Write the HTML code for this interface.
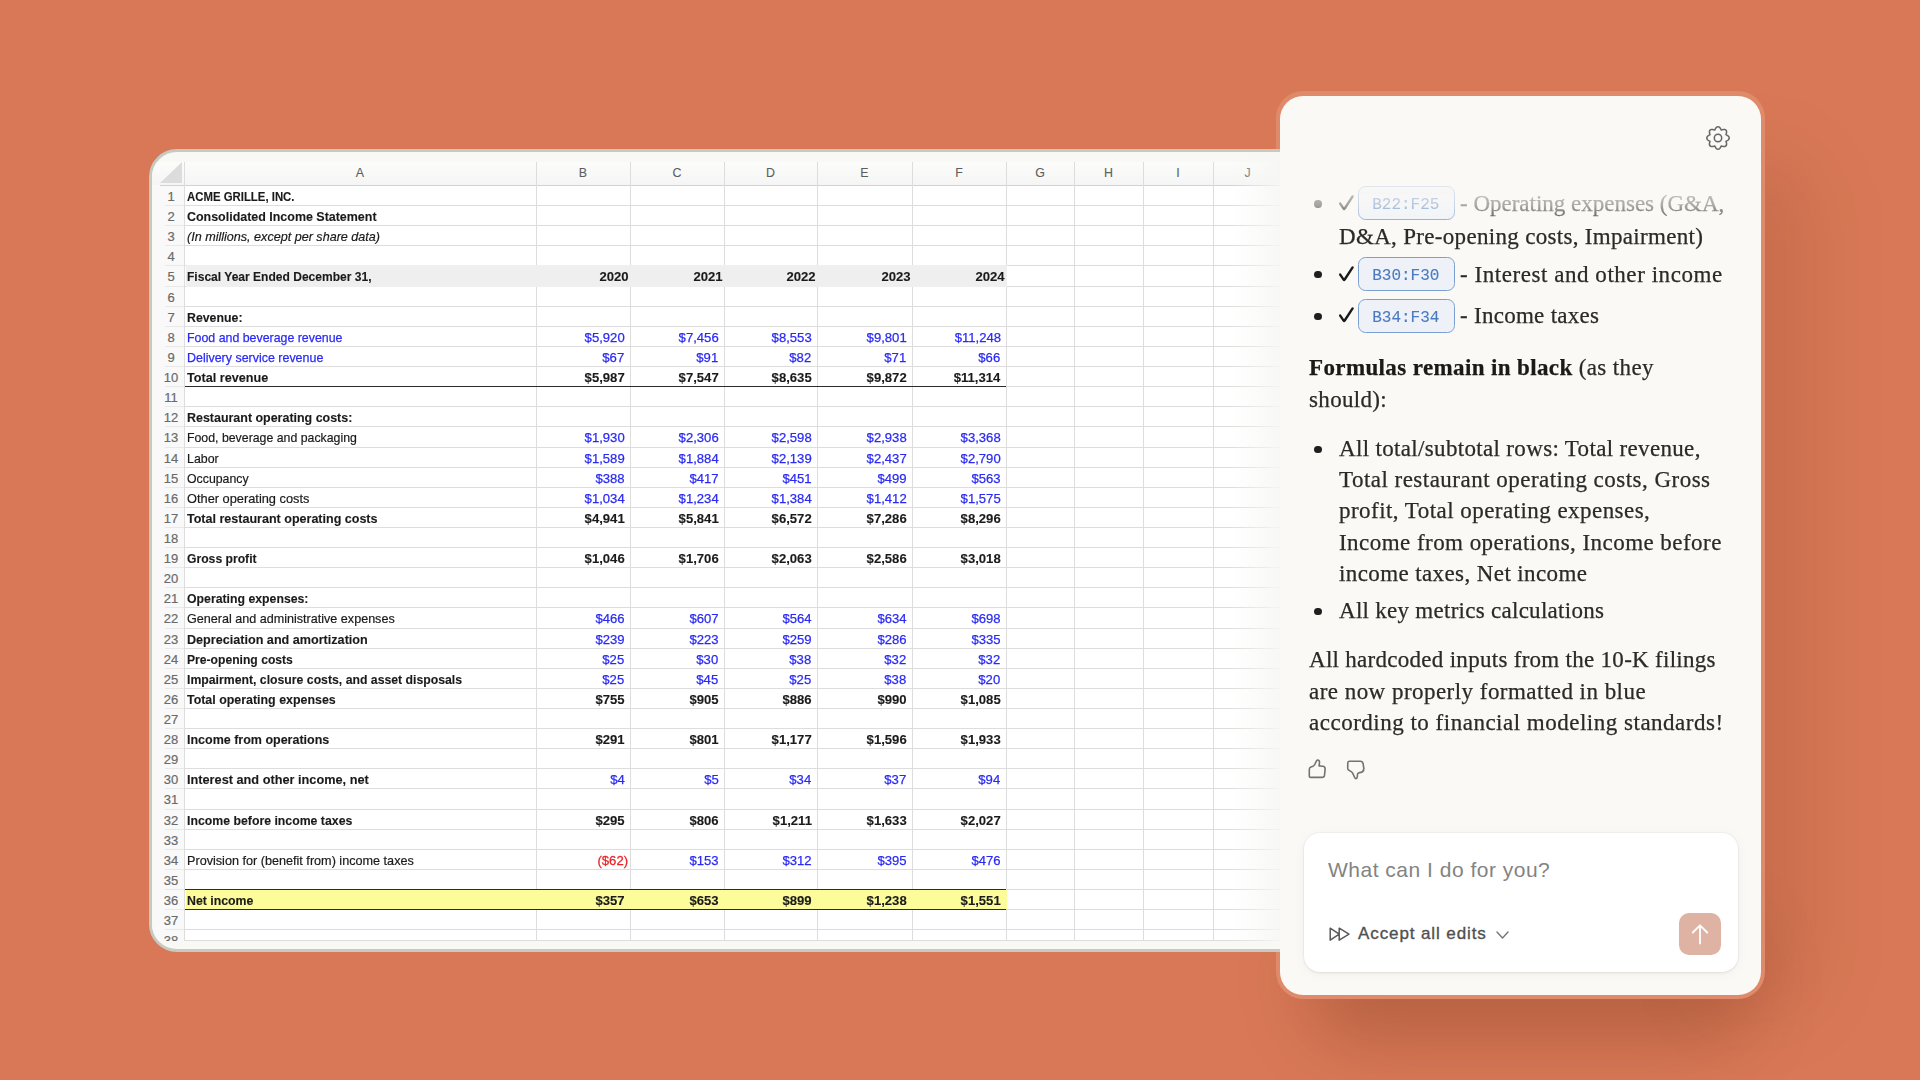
<!DOCTYPE html>
<html><head><meta charset="utf-8">
<style>
html,body{margin:0;padding:0;}
body{width:1920px;height:1080px;overflow:hidden;background:#d87856;position:relative;font-family:"Liberation Sans",sans-serif;}
#sheet{position:absolute;left:149px;top:149px;width:1180px;height:803px;box-sizing:border-box;border:3px solid #c8cac2;border-radius:28px;background:#f8f8f5;overflow:hidden;}
#clip{position:absolute;left:152px;top:152px;width:1130px;height:789px;overflow:hidden;}
.in2{position:absolute;left:-152px;top:-152px;width:1920px;height:1080px;}
#sheet .in{position:absolute;left:-152px;top:-152px;width:1920px;height:1080px;}
.hl{position:absolute;height:1px;background:#dddddd;}
.vl{position:absolute;width:1px;background:#dddddd;}
.tb{position:absolute;left:185px;width:821px;height:1.6px;background:#2b2b2b;}
.colh{position:absolute;top:162px;height:23px;width:60px;text-align:center;font-size:12.4px;line-height:23px;color:#5e5e5e;-webkit-text-stroke:0.1px #5e5e5e;}
.rn{position:absolute;left:152px;width:38px;text-align:center;font-size:13px;line-height:20px;height:20px;color:#6a6a6a;-webkit-text-stroke:0.2px #6a6a6a;}
.ca{-webkit-text-stroke:0.2px currentColor;position:absolute;left:187px;transform-origin:0 50%;font-size:13.2px;line-height:20px;height:20px;white-space:nowrap;color:#1a1a1a;}
.cn{position:absolute;transform-origin:100% 50%;transform:scaleX(0.985);font-size:13.3px;line-height:20px;height:20px;white-space:nowrap;color:#1a1a1a;}
.b{font-weight:bold;-webkit-text-stroke:0.12px currentColor;}
.it{font-style:italic;}
.blu{color:#2a2af5;-webkit-text-stroke:0.25px #2a2af5;}
.red{color:#e8262a;-webkit-text-stroke:0.3px #e8262a;}
#gridbg{position:absolute;left:185px;top:185px;width:1097px;height:756px;background:#fff;}
#rowhdr{position:absolute;left:152px;top:185px;width:33px;height:756px;background:#f9f9f9;}
#colhdr{position:absolute;left:152px;top:162px;width:1130px;height:23px;background:linear-gradient(#fcfcfb,#f5f5f5);}
#corner{position:absolute;left:160px;top:162px;width:22px;height:21px;background:#dcdcdc;clip-path:polygon(100% 0,100% 100%,0 100%);}
#fade{position:absolute;left:1232px;top:152px;width:50px;height:789px;background:linear-gradient(90deg,rgba(248,248,246,0),rgba(247,247,245,0.45) 50%,rgba(246,246,243,0.9));}

#ring{position:absolute;left:1276px;top:91px;width:489px;height:908px;border-radius:27px;background:#df8a6b;}
#shadow{position:absolute;left:1310px;top:920px;width:440px;height:120px;border-radius:50px;background:rgba(90,35,10,0.26);filter:blur(34px);}
#shadow2{position:absolute;left:1700px;top:160px;width:110px;height:850px;border-radius:50px;background:rgba(90,35,10,0.13);filter:blur(36px);}
#chat{position:absolute;left:1280px;top:96px;width:481px;height:899px;border-radius:23px;background:#faf9f5;overflow:hidden;font-family:"Liberation Serif",serif;color:#2a2a28;}

#chatc{position:absolute;left:0;top:0;width:1920px;height:1080px;font-family:"Liberation Serif",serif;color:#2a2a28;
  -webkit-mask-image:linear-gradient(180deg,rgba(0,0,0,0.08) 172px,rgba(0,0,0,0.38) 205px,#000 228px);mask-image:linear-gradient(180deg,rgba(0,0,0,0.08) 172px,rgba(0,0,0,0.38) 205px,#000 228px);}
.cl{position:absolute;white-space:nowrap;font-size:23px;line-height:30px;-webkit-text-stroke:0.25px currentColor;}
.cl b{font-weight:bold;color:#1a1a18;}
.bul{position:absolute;width:7.4px;height:7.4px;border-radius:50%;background:#1f1f1f;}
.chk{position:absolute;}
.chip{position:absolute;width:96.5px;height:34px;box-sizing:border-box;border:1.8px solid #7c9fd2;border-radius:7.5px;background:#eef2f8;font-family:"Liberation Mono",monospace;font-size:16px;line-height:20px;color:#4a7ac2;-webkit-text-stroke:0.12px #4a7ac2;}
#gear{position:absolute;left:1705px;top:125px;}
#thumbs{position:absolute;left:1300px;top:750px;}
#inbox{position:absolute;left:1304px;top:833px;width:434px;height:139px;border-radius:16px;background:#fff;box-shadow:0 1px 3px rgba(0,0,0,0.07),0 0 0 1px rgba(0,0,0,0.025),0 2px 14px rgba(0,0,0,0.035);}
#ph{position:absolute;left:1328px;top:858.0235px;font-family:"Liberation Sans",sans-serif;font-size:21px;line-height:24px;color:#838383;white-space:nowrap;letter-spacing:0.5px;}
#acc{position:absolute;left:1358px;top:923.9095px;font-family:"Liberation Sans",sans-serif;font-size:17px;line-height:20px;color:#505050;white-space:nowrap;letter-spacing:0.9px;-webkit-text-stroke:0.35px #505050;}
#send{position:absolute;left:1679px;top:913px;width:42px;height:42px;border-radius:10px;background:#deb3a3;}
</style></head><body>
<div id="shadow"></div>
<div id="shadow2"></div>
<div id="ring"></div>
<div id="sheet"><div class="in">
<div id="clip"><div class="in2">
<div id="colhdr"></div>
<div id="rowhdr"></div>
<div id="gridbg"></div>
<div id="corner"></div>
<div class="hl" style="top:184.5px;left:160px;width:1122px;background:#d2d2d2;height:1.5px"></div>
<div class="hl" style="top:205.12px;left:165px;width:20px;background:#e9e9e9"></div>
<div class="hl" style="top:205.12px;left:185px;width:1097px"></div>
<div class="hl" style="top:225.23px;left:165px;width:20px;background:#e9e9e9"></div>
<div class="hl" style="top:225.23px;left:185px;width:1097px"></div>
<div class="hl" style="top:245.34px;left:165px;width:20px;background:#e9e9e9"></div>
<div class="hl" style="top:245.34px;left:185px;width:1097px"></div>
<div class="hl" style="top:265.46px;left:165px;width:20px;background:#e9e9e9"></div>
<div class="hl" style="top:265.46px;left:185px;width:1097px"></div>
<div class="hl" style="top:285.57px;left:165px;width:20px;background:#e9e9e9"></div>
<div class="hl" style="top:285.57px;left:185px;width:1097px"></div>
<div class="hl" style="top:305.69px;left:165px;width:20px;background:#e9e9e9"></div>
<div class="hl" style="top:305.69px;left:185px;width:1097px"></div>
<div class="hl" style="top:325.8px;left:165px;width:20px;background:#e9e9e9"></div>
<div class="hl" style="top:325.8px;left:185px;width:1097px"></div>
<div class="hl" style="top:345.92px;left:165px;width:20px;background:#e9e9e9"></div>
<div class="hl" style="top:345.92px;left:185px;width:1097px"></div>
<div class="hl" style="top:366.03px;left:165px;width:20px;background:#e9e9e9"></div>
<div class="hl" style="top:366.03px;left:185px;width:1097px"></div>
<div class="hl" style="top:386.15px;left:165px;width:20px;background:#e9e9e9"></div>
<div class="hl" style="top:386.15px;left:185px;width:1097px"></div>
<div class="hl" style="top:406.26px;left:165px;width:20px;background:#e9e9e9"></div>
<div class="hl" style="top:406.26px;left:185px;width:1097px"></div>
<div class="hl" style="top:426.38px;left:165px;width:20px;background:#e9e9e9"></div>
<div class="hl" style="top:426.38px;left:185px;width:1097px"></div>
<div class="hl" style="top:446.5px;left:165px;width:20px;background:#e9e9e9"></div>
<div class="hl" style="top:446.5px;left:185px;width:1097px"></div>
<div class="hl" style="top:466.61px;left:165px;width:20px;background:#e9e9e9"></div>
<div class="hl" style="top:466.61px;left:185px;width:1097px"></div>
<div class="hl" style="top:486.72px;left:165px;width:20px;background:#e9e9e9"></div>
<div class="hl" style="top:486.72px;left:185px;width:1097px"></div>
<div class="hl" style="top:506.84px;left:165px;width:20px;background:#e9e9e9"></div>
<div class="hl" style="top:506.84px;left:185px;width:1097px"></div>
<div class="hl" style="top:526.95px;left:165px;width:20px;background:#e9e9e9"></div>
<div class="hl" style="top:526.95px;left:185px;width:1097px"></div>
<div class="hl" style="top:547.07px;left:165px;width:20px;background:#e9e9e9"></div>
<div class="hl" style="top:547.07px;left:185px;width:1097px"></div>
<div class="hl" style="top:567.18px;left:165px;width:20px;background:#e9e9e9"></div>
<div class="hl" style="top:567.18px;left:185px;width:1097px"></div>
<div class="hl" style="top:587.3px;left:165px;width:20px;background:#e9e9e9"></div>
<div class="hl" style="top:587.3px;left:185px;width:1097px"></div>
<div class="hl" style="top:607.41px;left:165px;width:20px;background:#e9e9e9"></div>
<div class="hl" style="top:607.41px;left:185px;width:1097px"></div>
<div class="hl" style="top:627.53px;left:165px;width:20px;background:#e9e9e9"></div>
<div class="hl" style="top:627.53px;left:185px;width:1097px"></div>
<div class="hl" style="top:647.64px;left:165px;width:20px;background:#e9e9e9"></div>
<div class="hl" style="top:647.64px;left:185px;width:1097px"></div>
<div class="hl" style="top:667.76px;left:165px;width:20px;background:#e9e9e9"></div>
<div class="hl" style="top:667.76px;left:185px;width:1097px"></div>
<div class="hl" style="top:687.88px;left:165px;width:20px;background:#e9e9e9"></div>
<div class="hl" style="top:687.88px;left:185px;width:1097px"></div>
<div class="hl" style="top:707.99px;left:165px;width:20px;background:#e9e9e9"></div>
<div class="hl" style="top:707.99px;left:185px;width:1097px"></div>
<div class="hl" style="top:728.1px;left:165px;width:20px;background:#e9e9e9"></div>
<div class="hl" style="top:728.1px;left:185px;width:1097px"></div>
<div class="hl" style="top:748.22px;left:165px;width:20px;background:#e9e9e9"></div>
<div class="hl" style="top:748.22px;left:185px;width:1097px"></div>
<div class="hl" style="top:768.33px;left:165px;width:20px;background:#e9e9e9"></div>
<div class="hl" style="top:768.33px;left:185px;width:1097px"></div>
<div class="hl" style="top:788.45px;left:165px;width:20px;background:#e9e9e9"></div>
<div class="hl" style="top:788.45px;left:185px;width:1097px"></div>
<div class="hl" style="top:808.56px;left:165px;width:20px;background:#e9e9e9"></div>
<div class="hl" style="top:808.56px;left:185px;width:1097px"></div>
<div class="hl" style="top:828.68px;left:165px;width:20px;background:#e9e9e9"></div>
<div class="hl" style="top:828.68px;left:185px;width:1097px"></div>
<div class="hl" style="top:848.79px;left:165px;width:20px;background:#e9e9e9"></div>
<div class="hl" style="top:848.79px;left:185px;width:1097px"></div>
<div class="hl" style="top:868.91px;left:165px;width:20px;background:#e9e9e9"></div>
<div class="hl" style="top:868.91px;left:185px;width:1097px"></div>
<div class="hl" style="top:889.02px;left:165px;width:20px;background:#e9e9e9"></div>
<div class="hl" style="top:889.02px;left:185px;width:1097px"></div>
<div class="hl" style="top:909.14px;left:165px;width:20px;background:#e9e9e9"></div>
<div class="hl" style="top:909.14px;left:185px;width:1097px"></div>
<div class="hl" style="top:929.25px;left:165px;width:20px;background:#e9e9e9"></div>
<div class="hl" style="top:929.25px;left:185px;width:1097px"></div>
<div class="hl" style="top:940px;left:185px;width:1097px"></div>
<div class="vl" style="left:184px;top:162px;height:779px"></div>
<div class="vl" style="left:536px;top:162px;height:779px"></div>
<div class="vl" style="left:630px;top:162px;height:779px"></div>
<div class="vl" style="left:724px;top:162px;height:779px"></div>
<div class="vl" style="left:817px;top:162px;height:779px"></div>
<div class="vl" style="left:912px;top:162px;height:779px"></div>
<div class="vl" style="left:1006px;top:162px;height:779px"></div>
<div class="vl" style="left:1074px;top:162px;height:779px"></div>
<div class="vl" style="left:1143px;top:162px;height:779px"></div>
<div class="vl" style="left:1213px;top:162px;height:779px"></div>
<div class="colh" style="left:330px">A</div>
<div class="colh" style="left:553px">B</div>
<div class="colh" style="left:647px">C</div>
<div class="colh" style="left:740.5px">D</div>
<div class="colh" style="left:834.5px">E</div>
<div class="colh" style="left:929px">F</div>
<div class="colh" style="left:1010px">G</div>
<div class="colh" style="left:1078.5px">H</div>
<div class="colh" style="left:1148px">I</div>
<div class="colh" style="left:1217.5px">J</div>
<div style="position:absolute;left:186px;top:265.46px;width:821px;height:21.11px;background:#efefef"></div>
<div style="position:absolute;left:186px;top:889.02px;width:821px;height:20.11px;background:#fdfc9b"></div>
<div class="tb" style="top:385.65px"></div>
<div class="tb" style="top:888.52px"></div>
<div class="tb" style="top:908.64px"></div>
<div class="rn" style="top:187px">1</div>
<div class="rn" style="top:207.12px">2</div>
<div class="rn" style="top:227.23px">3</div>
<div class="rn" style="top:247.34px">4</div>
<div class="rn" style="top:267.46px">5</div>
<div class="rn" style="top:287.57px">6</div>
<div class="rn" style="top:307.69px">7</div>
<div class="rn" style="top:327.8px">8</div>
<div class="rn" style="top:347.92px">9</div>
<div class="rn" style="top:368.03px">10</div>
<div class="rn" style="top:388.15px">11</div>
<div class="rn" style="top:408.26px">12</div>
<div class="rn" style="top:428.38px">13</div>
<div class="rn" style="top:448.5px">14</div>
<div class="rn" style="top:468.61px">15</div>
<div class="rn" style="top:488.72px">16</div>
<div class="rn" style="top:508.84px">17</div>
<div class="rn" style="top:528.95px">18</div>
<div class="rn" style="top:549.07px">19</div>
<div class="rn" style="top:569.18px">20</div>
<div class="rn" style="top:589.3px">21</div>
<div class="rn" style="top:609.41px">22</div>
<div class="rn" style="top:629.53px">23</div>
<div class="rn" style="top:649.64px">24</div>
<div class="rn" style="top:669.76px">25</div>
<div class="rn" style="top:689.88px">26</div>
<div class="rn" style="top:709.99px">27</div>
<div class="rn" style="top:730.1px">28</div>
<div class="rn" style="top:750.22px">29</div>
<div class="rn" style="top:770.33px">30</div>
<div class="rn" style="top:790.45px">31</div>
<div class="rn" style="top:810.56px">32</div>
<div class="rn" style="top:830.68px">33</div>
<div class="rn" style="top:850.79px">34</div>
<div class="rn" style="top:870.91px">35</div>
<div class="rn" style="top:891.02px">36</div>
<div class="rn" style="top:911.14px">37</div>
<div class="rn" style="top:931.25px">38</div>
<div class="ca b" style="top:187px;transform:scaleX(0.863)">ACME GRILLE, INC.</div>
<div class="ca b" style="top:207.12px;transform:scaleX(0.944)">Consolidated Income Statement</div>
<div class="ca it" style="top:227.23px;transform:scaleX(0.954)">(In millions, except per share data)</div>
<div class="ca b" style="top:267.46px;transform:scaleX(0.913)">Fiscal Year Ended December 31,</div>
<div class="cn b" style="top:267.46px;right:1291.8px">2020</div>
<div class="cn b" style="top:267.46px;right:1197.8px">2021</div>
<div class="cn b" style="top:267.46px;right:1104.8px">2022</div>
<div class="cn b" style="top:267.46px;right:1009.8px">2023</div>
<div class="cn b" style="top:267.46px;right:915.8px">2024</div>
<div class="ca b" style="top:307.69px;transform:scaleX(0.935)">Revenue:</div>
<div class="ca blu" style="top:327.8px;transform:scaleX(0.938)">Food and beverage revenue</div>
<div class="cn blu" style="top:327.8px;right:1295.4px">$5,920</div>
<div class="cn blu" style="top:327.8px;right:1201.4px">$7,456</div>
<div class="cn blu" style="top:327.8px;right:1108.4px">$8,553</div>
<div class="cn blu" style="top:327.8px;right:1013.4px">$9,801</div>
<div class="cn blu" style="top:327.8px;right:919.4px">$11,248</div>
<div class="ca blu" style="top:347.92px;transform:scaleX(0.944)">Delivery service revenue</div>
<div class="cn blu" style="top:347.92px;right:1295.4px">$67</div>
<div class="cn blu" style="top:347.92px;right:1201.4px">$91</div>
<div class="cn blu" style="top:347.92px;right:1108.4px">$82</div>
<div class="cn blu" style="top:347.92px;right:1013.4px">$71</div>
<div class="cn blu" style="top:347.92px;right:919.4px">$66</div>
<div class="ca b" style="top:368.03px;transform:scaleX(0.959)">Total revenue</div>
<div class="cn b" style="top:368.03px;right:1295.4px">$5,987</div>
<div class="cn b" style="top:368.03px;right:1201.4px">$7,547</div>
<div class="cn b" style="top:368.03px;right:1108.4px">$8,635</div>
<div class="cn b" style="top:368.03px;right:1013.4px">$9,872</div>
<div class="cn b" style="top:368.03px;right:919.4px">$11,314</div>
<div class="ca b" style="top:408.26px;transform:scaleX(0.944)">Restaurant operating costs:</div>
<div class="ca " style="top:428.38px;transform:scaleX(0.934)">Food, beverage and packaging</div>
<div class="cn blu" style="top:428.38px;right:1295.4px">$1,930</div>
<div class="cn blu" style="top:428.38px;right:1201.4px">$2,306</div>
<div class="cn blu" style="top:428.38px;right:1108.4px">$2,598</div>
<div class="cn blu" style="top:428.38px;right:1013.4px">$2,938</div>
<div class="cn blu" style="top:428.38px;right:919.4px">$3,368</div>
<div class="ca " style="top:448.5px;transform:scaleX(0.940)">Labor</div>
<div class="cn blu" style="top:448.5px;right:1295.4px">$1,589</div>
<div class="cn blu" style="top:448.5px;right:1201.4px">$1,884</div>
<div class="cn blu" style="top:448.5px;right:1108.4px">$2,139</div>
<div class="cn blu" style="top:448.5px;right:1013.4px">$2,437</div>
<div class="cn blu" style="top:448.5px;right:919.4px">$2,790</div>
<div class="ca " style="top:468.61px;transform:scaleX(0.934)">Occupancy</div>
<div class="cn blu" style="top:468.61px;right:1295.4px">$388</div>
<div class="cn blu" style="top:468.61px;right:1201.4px">$417</div>
<div class="cn blu" style="top:468.61px;right:1108.4px">$451</div>
<div class="cn blu" style="top:468.61px;right:1013.4px">$499</div>
<div class="cn blu" style="top:468.61px;right:919.4px">$563</div>
<div class="ca " style="top:488.72px;transform:scaleX(0.971)">Other operating costs</div>
<div class="cn blu" style="top:488.72px;right:1295.4px">$1,034</div>
<div class="cn blu" style="top:488.72px;right:1201.4px">$1,234</div>
<div class="cn blu" style="top:488.72px;right:1108.4px">$1,384</div>
<div class="cn blu" style="top:488.72px;right:1013.4px">$1,412</div>
<div class="cn blu" style="top:488.72px;right:919.4px">$1,575</div>
<div class="ca b" style="top:508.84px;transform:scaleX(0.950)">Total restaurant operating costs</div>
<div class="cn b" style="top:508.84px;right:1295.4px">$4,941</div>
<div class="cn b" style="top:508.84px;right:1201.4px">$5,841</div>
<div class="cn b" style="top:508.84px;right:1108.4px">$6,572</div>
<div class="cn b" style="top:508.84px;right:1013.4px">$7,286</div>
<div class="cn b" style="top:508.84px;right:919.4px">$8,296</div>
<div class="ca b" style="top:549.07px;transform:scaleX(0.922)">Gross profit</div>
<div class="cn b" style="top:549.07px;right:1295.4px">$1,046</div>
<div class="cn b" style="top:549.07px;right:1201.4px">$1,706</div>
<div class="cn b" style="top:549.07px;right:1108.4px">$2,063</div>
<div class="cn b" style="top:549.07px;right:1013.4px">$2,586</div>
<div class="cn b" style="top:549.07px;right:919.4px">$3,018</div>
<div class="ca b" style="top:589.3px;transform:scaleX(0.931)">Operating expenses:</div>
<div class="ca " style="top:609.41px;transform:scaleX(0.954)">General and administrative expenses</div>
<div class="cn blu" style="top:609.41px;right:1295.4px">$466</div>
<div class="cn blu" style="top:609.41px;right:1201.4px">$607</div>
<div class="cn blu" style="top:609.41px;right:1108.4px">$564</div>
<div class="cn blu" style="top:609.41px;right:1013.4px">$634</div>
<div class="cn blu" style="top:609.41px;right:919.4px">$698</div>
<div class="ca b" style="top:629.53px;transform:scaleX(0.956)">Depreciation and amortization</div>
<div class="cn blu" style="top:629.53px;right:1295.4px">$239</div>
<div class="cn blu" style="top:629.53px;right:1201.4px">$223</div>
<div class="cn blu" style="top:629.53px;right:1108.4px">$259</div>
<div class="cn blu" style="top:629.53px;right:1013.4px">$286</div>
<div class="cn blu" style="top:629.53px;right:919.4px">$335</div>
<div class="ca b" style="top:649.64px;transform:scaleX(0.920)">Pre-opening costs</div>
<div class="cn blu" style="top:649.64px;right:1295.4px">$25</div>
<div class="cn blu" style="top:649.64px;right:1201.4px">$30</div>
<div class="cn blu" style="top:649.64px;right:1108.4px">$38</div>
<div class="cn blu" style="top:649.64px;right:1013.4px">$32</div>
<div class="cn blu" style="top:649.64px;right:919.4px">$32</div>
<div class="ca b" style="top:669.76px;transform:scaleX(0.929)">Impairment, closure costs, and asset disposals</div>
<div class="cn blu" style="top:669.76px;right:1295.4px">$25</div>
<div class="cn blu" style="top:669.76px;right:1201.4px">$45</div>
<div class="cn blu" style="top:669.76px;right:1108.4px">$25</div>
<div class="cn blu" style="top:669.76px;right:1013.4px">$38</div>
<div class="cn blu" style="top:669.76px;right:919.4px">$20</div>
<div class="ca b" style="top:689.88px;transform:scaleX(0.941)">Total operating expenses</div>
<div class="cn b" style="top:689.88px;right:1295.4px">$755</div>
<div class="cn b" style="top:689.88px;right:1201.4px">$905</div>
<div class="cn b" style="top:689.88px;right:1108.4px">$886</div>
<div class="cn b" style="top:689.88px;right:1013.4px">$990</div>
<div class="cn b" style="top:689.88px;right:919.4px">$1,085</div>
<div class="ca b" style="top:730.1px;transform:scaleX(0.947)">Income from operations</div>
<div class="cn b" style="top:730.1px;right:1295.4px">$291</div>
<div class="cn b" style="top:730.1px;right:1201.4px">$801</div>
<div class="cn b" style="top:730.1px;right:1108.4px">$1,177</div>
<div class="cn b" style="top:730.1px;right:1013.4px">$1,596</div>
<div class="cn b" style="top:730.1px;right:919.4px">$1,933</div>
<div class="ca b" style="top:770.33px;transform:scaleX(0.965)">Interest and other income, net</div>
<div class="cn blu" style="top:770.33px;right:1295.4px">$4</div>
<div class="cn blu" style="top:770.33px;right:1201.4px">$5</div>
<div class="cn blu" style="top:770.33px;right:1108.4px">$34</div>
<div class="cn blu" style="top:770.33px;right:1013.4px">$37</div>
<div class="cn blu" style="top:770.33px;right:919.4px">$94</div>
<div class="ca b" style="top:810.56px;transform:scaleX(0.932)">Income before income taxes</div>
<div class="cn b" style="top:810.56px;right:1295.4px">$295</div>
<div class="cn b" style="top:810.56px;right:1201.4px">$806</div>
<div class="cn b" style="top:810.56px;right:1108.4px">$1,211</div>
<div class="cn b" style="top:810.56px;right:1013.4px">$1,633</div>
<div class="cn b" style="top:810.56px;right:919.4px">$2,027</div>
<div class="ca " style="top:850.79px;transform:scaleX(0.958)">Provision for (benefit from) income taxes</div>
<div class="cn red" style="top:850.79px;right:1291.8px">($62)</div>
<div class="cn blu" style="top:850.79px;right:1201.4px">$153</div>
<div class="cn blu" style="top:850.79px;right:1108.4px">$312</div>
<div class="cn blu" style="top:850.79px;right:1013.4px">$395</div>
<div class="cn blu" style="top:850.79px;right:919.4px">$476</div>
<div class="ca b" style="top:891.02px;transform:scaleX(0.934)">Net income</div>
<div class="cn b" style="top:891.02px;right:1295.4px">$357</div>
<div class="cn b" style="top:891.02px;right:1201.4px">$653</div>
<div class="cn b" style="top:891.02px;right:1108.4px">$899</div>
<div class="cn b" style="top:891.02px;right:1013.4px">$1,238</div>
<div class="cn b" style="top:891.02px;right:919.4px">$1,551</div>
<div id="fade"></div>
</div></div>
</div></div>
<div id="chat"></div>
<svg id="gear" width="26" height="26" viewBox="0 0 26 26"><path d="M13.00 1.80 L13.44 1.85 L13.87 1.99 L14.28 2.21 L14.66 2.51 L15.01 2.88 L15.33 3.30 L15.61 3.75 L15.85 4.22 L16.07 4.67 L16.29 5.05 L16.72 4.94 L17.19 4.77 L17.69 4.62 L18.21 4.50 L18.73 4.42 L19.24 4.41 L19.73 4.47 L20.18 4.60 L20.58 4.80 L20.92 5.08 L21.20 5.42 L21.40 5.82 L21.53 6.27 L21.59 6.76 L21.58 7.27 L21.50 7.79 L21.38 8.31 L21.23 8.81 L21.06 9.28 L20.95 9.71 L21.33 9.93 L21.78 10.15 L22.25 10.39 L22.70 10.67 L23.12 10.99 L23.49 11.34 L23.79 11.72 L24.01 12.13 L24.15 12.56 L24.20 13.00 L24.15 13.44 L24.01 13.87 L23.79 14.28 L23.49 14.66 L23.12 15.01 L22.70 15.33 L22.25 15.61 L21.78 15.85 L21.33 16.07 L20.95 16.29 L21.06 16.72 L21.23 17.19 L21.38 17.69 L21.50 18.21 L21.58 18.73 L21.59 19.24 L21.53 19.73 L21.40 20.18 L21.20 20.58 L20.92 20.92 L20.58 21.20 L20.18 21.40 L19.73 21.53 L19.24 21.59 L18.73 21.58 L18.21 21.50 L17.69 21.38 L17.19 21.23 L16.72 21.06 L16.29 20.95 L16.07 21.33 L15.85 21.78 L15.61 22.25 L15.33 22.70 L15.01 23.12 L14.66 23.49 L14.28 23.79 L13.87 24.01 L13.44 24.15 L13.00 24.20 L12.56 24.15 L12.13 24.01 L11.72 23.79 L11.34 23.49 L10.99 23.12 L10.67 22.70 L10.39 22.25 L10.15 21.78 L9.93 21.33 L9.71 20.95 L9.28 21.06 L8.81 21.23 L8.31 21.38 L7.79 21.50 L7.27 21.58 L6.76 21.59 L6.27 21.53 L5.82 21.40 L5.42 21.20 L5.08 20.92 L4.80 20.58 L4.60 20.18 L4.47 19.73 L4.41 19.24 L4.42 18.73 L4.50 18.21 L4.62 17.69 L4.77 17.19 L4.94 16.72 L5.05 16.29 L4.67 16.07 L4.22 15.85 L3.75 15.61 L3.30 15.33 L2.88 15.01 L2.51 14.66 L2.21 14.28 L1.99 13.87 L1.85 13.44 L1.80 13.00 L1.85 12.56 L1.99 12.13 L2.21 11.72 L2.51 11.34 L2.88 10.99 L3.30 10.67 L3.75 10.39 L4.22 10.15 L4.67 9.93 L5.05 9.71 L4.94 9.28 L4.77 8.81 L4.62 8.31 L4.50 7.79 L4.42 7.27 L4.41 6.76 L4.47 6.27 L4.60 5.82 L4.80 5.42 L5.08 5.08 L5.42 4.80 L5.82 4.60 L6.27 4.47 L6.76 4.41 L7.27 4.42 L7.79 4.50 L8.31 4.62 L8.81 4.77 L9.28 4.94 L9.71 5.05 L9.93 4.67 L10.15 4.22 L10.39 3.75 L10.67 3.30 L10.99 2.88 L11.34 2.51 L11.72 2.21 L12.13 1.99 L12.56 1.85 Z" fill="none" stroke="#666" stroke-width="1.5" stroke-linejoin="round"/><circle cx="13" cy="13" r="3.7" fill="none" stroke="#666" stroke-width="1.5"/></svg>
<div id="chatc">
<div class="cl" style="left:1460px;top:188.74px;letter-spacing:-0.005px">- Operating expenses (G&amp;A,</div>
<div class="cl" style="left:1339px;top:222.04px;letter-spacing:0.315px">D&amp;A, Pre-opening costs, Impairment)</div>
<div class="cl" style="left:1460px;top:259.74px;letter-spacing:0.550px">- Interest and other income</div>
<div class="cl" style="left:1460px;top:301.24px;letter-spacing:0.279px">- Income taxes</div>
<div class="cl" style="left:1309px;top:353.34px;letter-spacing:0.379px"><b>Formulas remain in black</b> (as they</div>
<div class="cl" style="left:1309px;top:384.54px;letter-spacing:0.339px">should):</div>
<div class="cl" style="left:1339px;top:433.54px;letter-spacing:0.336px">All total/subtotal rows: Total revenue,</div>
<div class="cl" style="left:1339px;top:465.24px;letter-spacing:0.478px">Total restaurant operating costs, Gross</div>
<div class="cl" style="left:1339px;top:496.24px;letter-spacing:0.455px">profit, Total operating expenses,</div>
<div class="cl" style="left:1339px;top:528.14px;letter-spacing:0.457px">Income from operations, Income before</div>
<div class="cl" style="left:1339px;top:559.24px;letter-spacing:0.397px">income taxes, Net income</div>
<div class="cl" style="left:1339px;top:596.24px;letter-spacing:0.278px">All key metrics calculations</div>
<div class="cl" style="left:1309px;top:645.34px;letter-spacing:0.287px">All hardcoded inputs from the 10-K filings</div>
<div class="cl" style="left:1309px;top:676.84px;letter-spacing:0.466px">are now properly formatted in blue</div>
<div class="cl" style="left:1309px;top:708.44px;letter-spacing:0.504px">according to financial modeling standards!</div>
<div class="bul" style="left:1314.3px;top:200.3px"></div>
<div class="bul" style="left:1314.3px;top:271.1px"></div>
<div class="bul" style="left:1314.3px;top:312.6px"></div>
<div class="bul" style="left:1314.3px;top:445.7px"></div>
<div class="bul" style="left:1314.3px;top:607.8px"></div>
<svg class="chk" style="left:1339px;top:194.5px" width="15" height="16" viewBox="0 0 15 16"><path d="M1.2 8.6 L4.6 13.6 Q5.2 14.4 5.7 13.5 L13.6 1.4" fill="none" stroke="#1a1a1a" stroke-width="2.4" stroke-linecap="round" stroke-linejoin="round"/></svg>
<div class="chip" style="left:1358px;top:186px"><span style="position:absolute;left:13.2px;top:8.34px">B22:F25</span></div>
<svg class="chk" style="left:1339px;top:265.5px" width="15" height="16" viewBox="0 0 15 16"><path d="M1.2 8.6 L4.6 13.6 Q5.2 14.4 5.7 13.5 L13.6 1.4" fill="none" stroke="#1a1a1a" stroke-width="2.4" stroke-linecap="round" stroke-linejoin="round"/></svg>
<div class="chip" style="left:1358px;top:257px"><span style="position:absolute;left:13.2px;top:8.34px">B30:F30</span></div>
<svg class="chk" style="left:1339px;top:307px" width="15" height="16" viewBox="0 0 15 16"><path d="M1.2 8.6 L4.6 13.6 Q5.2 14.4 5.7 13.5 L13.6 1.4" fill="none" stroke="#1a1a1a" stroke-width="2.4" stroke-linecap="round" stroke-linejoin="round"/></svg>
<div class="chip" style="left:1358px;top:298.5px"><span style="position:absolute;left:13.2px;top:8.34px">B34:F34</span></div>
</div>
<svg id="thumbs" width="80" height="40" viewBox="0 0 80 40">
<path d="M9.3 26.3 V19.4 Q9.3 17.7 10.9 17.1 L12.4 16.5 Q13.9 15.9 14.8 14.3 L16.5 10.9 Q17.3 9.6 18.5 10.2 Q19.7 10.9 19.5 12.5 L19.1 15.9 L22.7 16.2 Q25.3 16.5 25.1 19.3 L24.5 25.4 Q24.2 27.4 22.1 27.4 L10.6 27.4 Q9.3 27.4 9.3 26.3 Z" fill="none" stroke="#737370" stroke-width="1.6" stroke-linejoin="round"/>
<path d="M47.8 13.2 Q47.7 11.3 49.6 11.3 L60.4 11.3 Q62.6 11.4 63.1 13.6 L63.8 18.2 Q64 21.6 60.9 22.4 L58.6 22.9 Q57.6 23.2 57.5 24.3 L57.3 26.6 Q57.1 28.6 55.9 28.6 Q54.9 28.5 54.3 26.8 L52.9 23.6 Q52 21.5 50.2 20.9 L49.4 20.6 Q47.8 20 47.7 18.2 Z" fill="none" stroke="#737370" stroke-width="1.6" stroke-linejoin="round"/>
</svg>
<div id="inbox"></div>
<div id="ph">What can I do for you?</div>
<svg style="position:absolute;left:1328px;top:926px" width="24" height="16" viewBox="0 0 24 16"><path d="M2.2 2.2 L2.2 14.2 L11.2 8.2 Z M11.2 2.2 L11.2 14.2 L21 8.2 Z" fill="none" stroke="#5a5a5a" stroke-width="1.5" stroke-linejoin="round"/></svg>
<div id="acc">Accept all edits</div>
<svg style="position:absolute;left:1495px;top:929px" width="16" height="12" viewBox="0 0 16 12"><path d="M2 3 L7.5 9 L13 3" fill="none" stroke="#777" stroke-width="1.4" stroke-linecap="round" stroke-linejoin="round"/></svg>
<div id="send"><svg width="42" height="42" viewBox="0 0 42 42"><path d="M21 30.5 V12.5 M13.8 19.5 L21 12.3 L28.2 19.5" fill="none" stroke="#fff" stroke-width="1.8" stroke-linecap="round" stroke-linejoin="round"/></svg></div>

</body></html>
